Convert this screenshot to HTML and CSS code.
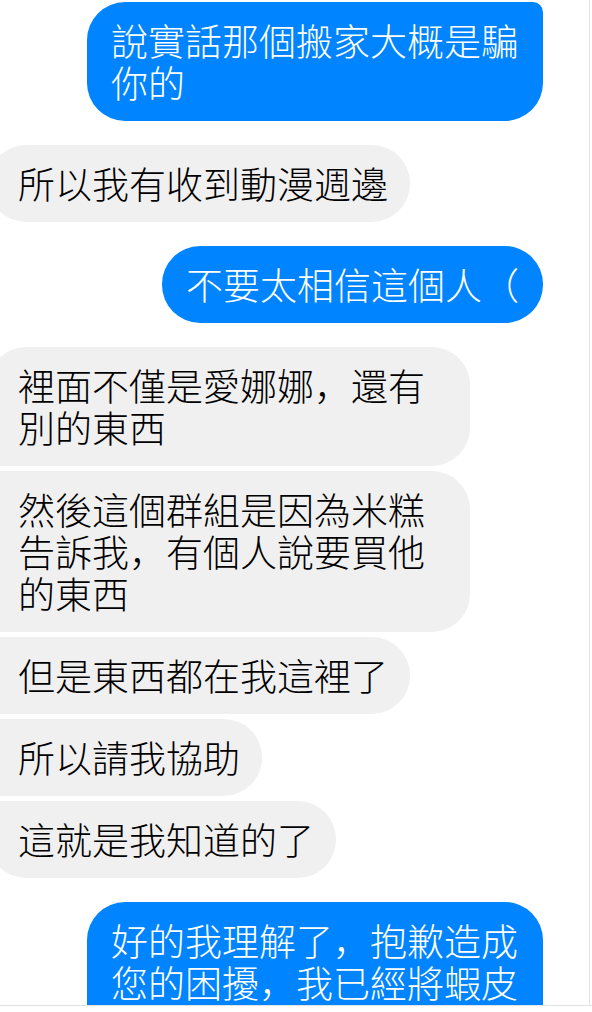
FILE: index.html
```html
<html>
    <head>
        <meta charset="utf-8">
        <title>Chat</title>
        <link rel="stylesheet" href="styles.css">
    </head>

    <body>
        <div class="screen">
            <div class="thread">
                <div class="msg msg-out cont-above">說實話那個搬家大概是騙你的</div>

                <div class="msg msg-in">所以我有收到動漫週邊</div>

                <div class="msg msg-out">不要太相信這個人（</div>

                <div class="msg msg-in group-start">裡面不僅是愛娜娜，還有別的東西</div>
                <div class="msg msg-in group-mid">然後這個群組是因為米糕告訴我，有個人說要買他的東西</div>
                <div class="msg msg-in group-mid">但是東西都在我這裡了</div>
                <div class="msg msg-in group-mid">所以請我協助</div>
                <div class="msg msg-in group-end">這就是我知道的了</div>

                <div class="msg msg-out clipped">好的我理解了，抱歉造成您的困擾，我已經將蝦皮</div>
            </div>
            <div class="composer"></div>
        </div>
    </body>
</html>
```

FILE: styles.css
```css
body {
    margin: 0;
    background: #fff;
    font-family: "Noto Sans CJK SC", "Noto Sans CJK TC", sans-serif;
}

.screen {
    width: 592px;
    height: 1012px;
    display: flex;
    flex-direction: column;
    overflow: hidden;
}

.thread {
    width: 590px;
    height: 1005px;
    flex: none;
    box-sizing: border-box;
    padding: 2px 46px 0 0;
    border-right: 1px solid #e4e4e4;
    display: flex;
    flex-direction: column;
    overflow: hidden;
}

.composer {
    flex: 1;
    border-top: 1px solid #e2e2e2;
    background: #fff;
}

.msg {
    flex: none;
    box-sizing: border-box;
    margin-top: 24px;
    font-size: 37px;
    font-weight: 300;
    line-height: 42px;
    border-radius: 38px;
}

.msg:first-child {
    margin-top: 0;
}

.msg-in {
    align-self: flex-start;
    margin-left: -12px;
    max-width: 482px;
    padding: 17px 22px 18px 30px;
    background: #f0f0f0;
    color: #000;
}

.msg-in + .msg-in {
    margin-top: 5px;
}

.msg-out {
    align-self: flex-end;
    max-width: 456px;
    padding: 17px 24px 18px;
    background: #0084ff;
    color: #fff;
}

.cont-above {
    border-top-right-radius: 10px;
}

.group-start {
    border-bottom-left-radius: 10px;
}

.group-mid {
    border-top-left-radius: 10px;
    border-bottom-left-radius: 10px;
}

.group-end {
    border-top-left-radius: 10px;
}

.clipped {
    padding-bottom: 60px;
}
```
